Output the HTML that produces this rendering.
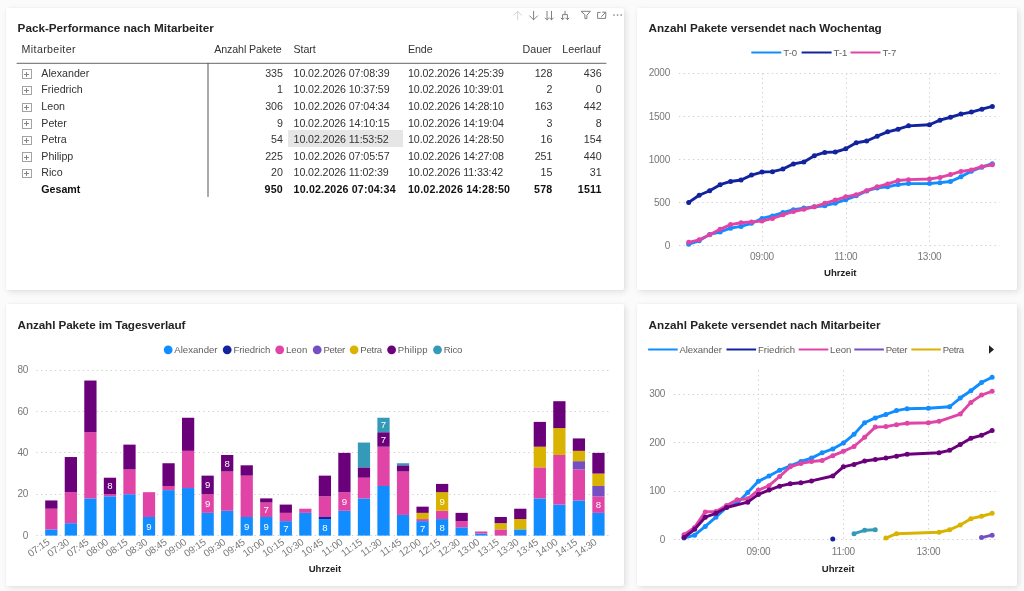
<!DOCTYPE html>
<html lang="de"><head><meta charset="utf-8"><title>Pack-Performance</title>
<style>
html,body{margin:0;padding:0}
body{width:1024px;height:591px;overflow:hidden;position:relative;background:#fbfbfb;font-family:"Liberation Sans",Arial,sans-serif;color:#333}
.panel{position:absolute;will-change:transform;background:#fff;border-radius:2px;box-shadow:2px 2px 6px rgba(0,0,0,.11),0 0 3px rgba(0,0,0,.05)}
.title{position:absolute;left:11.6px;top:12.9px;font-weight:bold;font-size:11.7px;line-height:14px;color:#252423;white-space:nowrap}
svg{position:absolute;left:0;top:0;overflow:visible}
svg text{font-family:"Liberation Sans",Arial,sans-serif}
.ax{font-size:10px;letter-spacing:-.22px;fill:#777}
.lg{font-size:9.6px;fill:#605E5C}
.at{font-size:9.6px;font-weight:bold;fill:#252423}
.dl{font-size:9.6px;fill:#fff}
.grid line{stroke:#cecece;stroke-width:1;stroke-dasharray:1.3 3.34}
.tbl{position:absolute;left:0;top:0;font-size:10.67px;color:#333}
.row{position:absolute;left:11px;width:589px;height:16.6px;line-height:16.6px;white-space:nowrap}
.row span{position:absolute;top:0}
.c1{left:24.3px}.c0{left:4.6px}
.c2{right:323.1px;text-align:right}
.c3{left:276.6px;letter-spacing:-.1px}.c4{left:391px;letter-spacing:-.1px}
.c5{right:53.6px;text-align:right}.c6{right:4.4px;text-align:right}.hd .c5{right:54.4px}.hd .c6{right:5.2px}
.hd .c0{letter-spacing:.36px}.hd .c2{letter-spacing:-.1px;right:324.4px}
.tot{font-weight:bold;color:#111}
.tot .c3,.tot .c4,.tot .c2,.tot .c5,.tot .c6{letter-spacing:.17px}
.ex{position:absolute;left:5.2px;top:4.5px;width:7.6px;height:7.6px;border:1px solid #a3a3a3;box-sizing:content-box}
.ex:before{content:"";position:absolute;left:1.3px;top:3.3px;width:5px;height:1px;background:#858585}
.ex:after{content:"";position:absolute;top:1.3px;left:3.3px;height:5px;width:1px;background:#858585}
.sel{position:absolute;left:282px;top:122.4px;width:115px;height:16.4px;background:#e6e6e6}
</style></head><body>

<div class="panel" style="left:6px;top:8px;width:618px;height:282px">
<div class="title">Pack-Performance nach Mitarbeiter</div>
<svg width="618" height="282" viewBox="6 8 618 282" fill="none" stroke-width="1" stroke-linecap="round" stroke-linejoin="round">
<g stroke="#d4d4d4"><path d="M517.6 19.8V11.3M513.7 15.2L517.6 11.3L521.5 15.2"/></g>
<g stroke="#808080">
<path d="M533.6 11.3V19.8M529.7 15.9L533.6 19.8L537.5 15.9"/>
<path d="M547 11.3V19.8M545.2 18L547 19.8L548.8 18M551.5 11.3V19.8M549.7 18L551.5 19.8L553.3 18"/>
<path d="M565 11.2V14.6M562.6 19.6V14.6H567.4V19.6M561.1 18.1L562.6 19.6L564.1 18.1M565.9 18.1L567.4 19.6L568.9 18.1"/>
<path d="M581.4 11.3H590.4L586.9 15.2V18.6H584.9V15.2Z"/>
<path d="M600.2 12.4H597.6V18.4H605.6V15.9M602.6 12.2H605.8V15.4M605.6 12.4L601.6 16.4"/>
</g>
<g fill="#808080" stroke="none"><circle cx="614" cy="15" r=".85"/><circle cx="617.6" cy="15" r=".85"/><circle cx="621.2" cy="15" r=".85"/></g>
<line x1="17" x2="606" y1="63.3" y2="63.3" stroke="#666"/>
<line x1="208" x2="208" y1="63.3" y2="196.5" stroke="#555"/>
</svg>
<div class="tbl">
<div class="sel"></div>
<div class="row hd" style="top:32.5px"><span class="c0">Mitarbeiter</span><span class="c2">Anzahl Pakete</span><span class="c3">Start</span><span class="c4">Ende</span><span class="c5">Dauer</span><span class="c6">Leerlauf</span></div>
<div class="row" style="top:56.8px"><i class="ex"></i><span class="c1">Alexander</span><span class="c2">335</span><span class="c3">10.02.2026 07:08:39</span><span class="c4">10.02.2026 14:25:39</span><span class="c5">128</span><span class="c6">436</span></div>
<div class="row" style="top:73.4px"><i class="ex"></i><span class="c1">Friedrich</span><span class="c2">1</span><span class="c3">10.02.2026 10:37:59</span><span class="c4">10.02.2026 10:39:01</span><span class="c5">2</span><span class="c6">0</span></div>
<div class="row" style="top:90px"><i class="ex"></i><span class="c1">Leon</span><span class="c2">306</span><span class="c3">10.02.2026 07:04:34</span><span class="c4">10.02.2026 14:28:10</span><span class="c5">163</span><span class="c6">442</span></div>
<div class="row" style="top:106.6px"><i class="ex"></i><span class="c1">Peter</span><span class="c2">9</span><span class="c3">10.02.2026 14:10:15</span><span class="c4">10.02.2026 14:19:04</span><span class="c5">3</span><span class="c6">8</span></div>
<div class="row" style="top:123.2px"><i class="ex"></i><span class="c1">Petra</span><span class="c2">54</span><span class="c3">10.02.2026 11:53:52</span><span class="c4">10.02.2026 14:28:50</span><span class="c5">16</span><span class="c6">154</span></div>
<div class="row" style="top:139.8px"><i class="ex"></i><span class="c1">Philipp</span><span class="c2">225</span><span class="c3">10.02.2026 07:05:57</span><span class="c4">10.02.2026 14:27:08</span><span class="c5">251</span><span class="c6">440</span></div>
<div class="row" style="top:156.4px"><i class="ex"></i><span class="c1">Rico</span><span class="c2">20</span><span class="c3">10.02.2026 11:02:39</span><span class="c4">10.02.2026 11:33:42</span><span class="c5">15</span><span class="c6">31</span></div>
<div class="row tot" style="top:173px"><span class="c1">Gesamt</span><span class="c2">950</span><span class="c3">10.02.2026 07:04:34</span><span class="c4">10.02.2026 14:28:50</span><span class="c5">578</span><span class="c6">1511</span></div>
</div></div>
<div class="panel" style="left:637px;top:8px;width:380px;height:282px">
<div class="title" style="letter-spacing:-.03px">Anzahl Pakete versendet nach Wochentag</div>
<svg width="380" height="282" viewBox="637 8 380 282">
<g class="grid">
<line x1="679" x2="999.5" y1="245.5" y2="245.5"/>
<line x1="679" x2="999.5" y1="202.5" y2="202.5"/>
<line x1="679" x2="999.5" y1="159.5" y2="159.5"/>
<line x1="679" x2="999.5" y1="116.5" y2="116.5"/>
<line x1="679" x2="999.5" y1="73.5" y2="73.5"/>
<line x1="762.5" x2="762.5" y1="73.4" y2="245.6"/>
<line x1="846.5" x2="846.5" y1="73.4" y2="245.6"/>
<line x1="929.5" x2="929.5" y1="73.4" y2="245.6"/>
</g>
<text class="ax" x="670" y="248.8" text-anchor="end">0</text>
<text class="ax" x="670" y="205.7" text-anchor="end">500</text>
<text class="ax" x="670" y="162.6" text-anchor="end">1000</text>
<text class="ax" x="670" y="119.5" text-anchor="end">1500</text>
<text class="ax" x="670" y="76.4" text-anchor="end">2000</text>
<text class="ax" x="761.99" y="259.6" text-anchor="middle">09:00</text>
<text class="ax" x="845.75" y="259.6" text-anchor="middle">11:00</text>
<text class="ax" x="929.51" y="259.6" text-anchor="middle">13:00</text>
<text class="at" x="840.3" y="276.2" text-anchor="middle">Uhrzeit</text>
<line x1="751.3" x2="781.3" y1="52.5" y2="52.5" stroke="#118DFF" stroke-width="2"/>
<text class="lg" x="783.3" y="55.9">T-0</text>
<line x1="801.6" x2="831.6" y1="52.5" y2="52.5" stroke="#12239E" stroke-width="2"/>
<text class="lg" x="833.6" y="55.9">T-1</text>
<line x1="850.5" x2="880.5" y1="52.5" y2="52.5" stroke="#E044A7" stroke-width="2"/>
<text class="lg" x="882.5" y="55.9">T-7</text>
<path d="M688.7 244.13 L699.17 240.86 L709.64 234.39 L720.11 231.98 L730.58 228.19 L741.05 226.38 L751.52 223.36 L761.99 218.45 L772.46 215.95 L782.93 212.59 L793.4 209.65 L803.87 208.1 L814.34 206.81 L824.81 205.69 L835.28 203.19 L845.75 199.74 L856.22 195.86 L866.69 190.95 L877.16 187.93 L887.63 186.73 L898.1 184.57 L908.57 183.62 L929.51 183.45 L939.98 182.67 L950.45 181.55 L960.92 176.81 L971.39 171.21 L981.86 167.16 L992.33 163.71" fill="none" stroke="#118DFF" stroke-width="2.9" stroke-linejoin="round" stroke-linecap="round"/><g fill="#118DFF"><circle cx="688.7" cy="244.13" r="2.5"/><circle cx="699.17" cy="240.86" r="2.5"/><circle cx="709.64" cy="234.39" r="2.5"/><circle cx="720.11" cy="231.98" r="2.5"/><circle cx="730.58" cy="228.19" r="2.5"/><circle cx="741.05" cy="226.38" r="2.5"/><circle cx="751.52" cy="223.36" r="2.5"/><circle cx="761.99" cy="218.45" r="2.5"/><circle cx="772.46" cy="215.95" r="2.5"/><circle cx="782.93" cy="212.59" r="2.5"/><circle cx="793.4" cy="209.65" r="2.5"/><circle cx="803.87" cy="208.1" r="2.5"/><circle cx="814.34" cy="206.81" r="2.5"/><circle cx="824.81" cy="205.69" r="2.5"/><circle cx="835.28" cy="203.19" r="2.5"/><circle cx="845.75" cy="199.74" r="2.5"/><circle cx="856.22" cy="195.86" r="2.5"/><circle cx="866.69" cy="190.95" r="2.5"/><circle cx="877.16" cy="187.93" r="2.5"/><circle cx="887.63" cy="186.73" r="2.5"/><circle cx="898.1" cy="184.57" r="2.5"/><circle cx="908.57" cy="183.62" r="2.5"/><circle cx="929.51" cy="183.45" r="2.5"/><circle cx="939.98" cy="182.67" r="2.5"/><circle cx="950.45" cy="181.55" r="2.5"/><circle cx="960.92" cy="176.81" r="2.5"/><circle cx="971.39" cy="171.21" r="2.5"/><circle cx="981.86" cy="167.16" r="2.5"/><circle cx="992.33" cy="163.71" r="2.5"/></g>
<path d="M688.7 202.41 L699.17 195.26 L709.64 190.78 L720.11 184.66 L730.58 181.47 L741.05 180 L751.52 175.09 L761.99 172.07 L772.46 171.64 L782.93 169.05 L793.4 163.88 L803.87 161.99 L814.34 155.69 L824.81 152.42 L835.28 151.99 L845.75 148.8 L856.22 142.76 L866.69 141.04 L877.16 136.21 L887.63 131.82 L898.1 129.23 L908.57 125.87 L929.51 124.75 L939.98 120.18 L950.45 117.25 L960.92 114.06 L971.39 112.08 L981.86 109.15 L992.33 106.39" fill="none" stroke="#12239E" stroke-width="2.9" stroke-linejoin="round" stroke-linecap="round"/><g fill="#12239E"><circle cx="688.7" cy="202.41" r="2.5"/><circle cx="699.17" cy="195.26" r="2.5"/><circle cx="709.64" cy="190.78" r="2.5"/><circle cx="720.11" cy="184.66" r="2.5"/><circle cx="730.58" cy="181.47" r="2.5"/><circle cx="741.05" cy="180" r="2.5"/><circle cx="751.52" cy="175.09" r="2.5"/><circle cx="761.99" cy="172.07" r="2.5"/><circle cx="772.46" cy="171.64" r="2.5"/><circle cx="782.93" cy="169.05" r="2.5"/><circle cx="793.4" cy="163.88" r="2.5"/><circle cx="803.87" cy="161.99" r="2.5"/><circle cx="814.34" cy="155.69" r="2.5"/><circle cx="824.81" cy="152.42" r="2.5"/><circle cx="835.28" cy="151.99" r="2.5"/><circle cx="845.75" cy="148.8" r="2.5"/><circle cx="856.22" cy="142.76" r="2.5"/><circle cx="866.69" cy="141.04" r="2.5"/><circle cx="877.16" cy="136.21" r="2.5"/><circle cx="887.63" cy="131.82" r="2.5"/><circle cx="898.1" cy="129.23" r="2.5"/><circle cx="908.57" cy="125.87" r="2.5"/><circle cx="929.51" cy="124.75" r="2.5"/><circle cx="939.98" cy="120.18" r="2.5"/><circle cx="950.45" cy="117.25" r="2.5"/><circle cx="960.92" cy="114.06" r="2.5"/><circle cx="971.39" cy="112.08" r="2.5"/><circle cx="981.86" cy="109.15" r="2.5"/><circle cx="992.33" cy="106.39" r="2.5"/></g>
<path d="M688.7 242.32 L699.17 239.82 L709.64 234.74 L720.11 229.22 L730.58 224.57 L741.05 222.76 L751.52 221.89 L761.99 221.12 L772.46 218.45 L782.93 214.83 L793.4 211.46 L803.87 209.22 L814.34 206.81 L824.81 203.28 L835.28 200.09 L845.75 196.81 L856.22 194.74 L866.69 190.69 L877.16 186.81 L887.63 183.97 L898.1 180.52 L908.57 179.66 L929.51 179.05 L939.98 177.42 L950.45 174.57 L960.92 171.47 L971.39 169.92 L981.86 166.64 L992.33 164.83" fill="none" stroke="#E044A7" stroke-width="2.9" stroke-linejoin="round" stroke-linecap="round"/><g fill="#E044A7"><circle cx="688.7" cy="242.32" r="2.5"/><circle cx="699.17" cy="239.82" r="2.5"/><circle cx="709.64" cy="234.74" r="2.5"/><circle cx="720.11" cy="229.22" r="2.5"/><circle cx="730.58" cy="224.57" r="2.5"/><circle cx="741.05" cy="222.76" r="2.5"/><circle cx="751.52" cy="221.89" r="2.5"/><circle cx="761.99" cy="221.12" r="2.5"/><circle cx="772.46" cy="218.45" r="2.5"/><circle cx="782.93" cy="214.83" r="2.5"/><circle cx="793.4" cy="211.46" r="2.5"/><circle cx="803.87" cy="209.22" r="2.5"/><circle cx="814.34" cy="206.81" r="2.5"/><circle cx="824.81" cy="203.28" r="2.5"/><circle cx="835.28" cy="200.09" r="2.5"/><circle cx="845.75" cy="196.81" r="2.5"/><circle cx="856.22" cy="194.74" r="2.5"/><circle cx="866.69" cy="190.69" r="2.5"/><circle cx="877.16" cy="186.81" r="2.5"/><circle cx="887.63" cy="183.97" r="2.5"/><circle cx="898.1" cy="180.52" r="2.5"/><circle cx="908.57" cy="179.66" r="2.5"/><circle cx="929.51" cy="179.05" r="2.5"/><circle cx="939.98" cy="177.42" r="2.5"/><circle cx="950.45" cy="174.57" r="2.5"/><circle cx="960.92" cy="171.47" r="2.5"/><circle cx="971.39" cy="169.92" r="2.5"/><circle cx="981.86" cy="166.64" r="2.5"/><circle cx="992.33" cy="164.83" r="2.5"/></g>
</svg></div>
<div class="panel" style="left:6px;top:304px;width:618px;height:282px">
<div class="title" style="top:14px;letter-spacing:-.1px">Anzahl Pakete im Tagesverlauf</div>
<svg width="618" height="282" viewBox="6 304 618 282">
<g class="grid">
<line x1="36.4" x2="611" y1="535.5" y2="535.5"/>
<line x1="36.4" x2="611" y1="494.5" y2="494.5"/>
<line x1="36.4" x2="611" y1="452.5" y2="452.5"/>
<line x1="36.4" x2="611" y1="411.5" y2="411.5"/>
<line x1="36.4" x2="611" y1="370.5" y2="370.5"/>
</g>
<text class="ax" x="28.2" y="538.7" text-anchor="end">0</text>
<text class="ax" x="28.2" y="497.35" text-anchor="end">20</text>
<text class="ax" x="28.2" y="456" text-anchor="end">40</text>
<text class="ax" x="28.2" y="414.65" text-anchor="end">60</text>
<text class="ax" x="28.2" y="373.3" text-anchor="end">80</text>
<circle cx="168.15" cy="349.8" r="4.4" fill="#118DFF"/>
<text class="lg" x="174.35" y="353.2">Alexander</text>
<circle cx="227.2" cy="349.8" r="4.4" fill="#12239E"/>
<text class="lg" x="233.4" y="353.2" style="letter-spacing:-0.05px">Friedrich</text>
<circle cx="279.7" cy="349.8" r="4.4" fill="#E044A7"/>
<text class="lg" x="285.9" y="353.2">Leon</text>
<circle cx="317.2" cy="349.8" r="4.4" fill="#744EC2"/>
<text class="lg" x="323.4" y="353.2" style="letter-spacing:-0.28px">Peter</text>
<circle cx="354.1" cy="349.8" r="4.4" fill="#D9B300"/>
<text class="lg" x="360.3" y="353.2" style="letter-spacing:-0.26px">Petra</text>
<circle cx="391.6" cy="349.8" r="4.4" fill="#6B007B"/>
<text class="lg" x="397.8" y="353.2" style="letter-spacing:0.15px">Philipp</text>
<circle cx="437.5" cy="349.8" r="4.4" fill="#3599B8"/>
<text class="lg" x="443.7" y="353.2" style="letter-spacing:-0.15px">Rico</text>
<rect x="45.2" y="529.4" width="12.25" height="6.2" fill="#118DFF"/>
<rect x="45.2" y="508.72" width="12.25" height="20.68" fill="#E044A7"/>
<rect x="45.2" y="500.45" width="12.25" height="8.27" fill="#6B007B"/>
<text class="ax" text-anchor="end" transform="translate(50.32 543.6) rotate(-35)">07:15</text>
<rect x="64.74" y="523.2" width="12.25" height="12.4" fill="#118DFF"/>
<rect x="64.74" y="492.18" width="12.25" height="31.01" fill="#E044A7"/>
<rect x="64.74" y="457.04" width="12.25" height="35.15" fill="#6B007B"/>
<text class="ax" text-anchor="end" transform="translate(69.86 543.6) rotate(-35)">07:30</text>
<rect x="84.28" y="498.39" width="12.25" height="37.21" fill="#118DFF"/>
<rect x="84.28" y="432.23" width="12.25" height="66.16" fill="#E044A7"/>
<rect x="84.28" y="380.54" width="12.25" height="51.69" fill="#6B007B"/>
<text class="ax" text-anchor="end" transform="translate(89.4 543.6) rotate(-35)">07:45</text>
<rect x="103.82" y="496.32" width="12.25" height="39.28" fill="#118DFF"/>
<rect x="103.82" y="494.25" width="12.25" height="2.07" fill="#E044A7"/>
<rect x="103.82" y="477.71" width="12.25" height="16.54" fill="#6B007B"/>
<text class="dl" x="109.94" y="489.38" text-anchor="middle">8</text>
<text class="ax" text-anchor="end" transform="translate(108.94 543.6) rotate(-35)">08:00</text>
<rect x="123.36" y="494.25" width="12.25" height="41.35" fill="#118DFF"/>
<rect x="123.36" y="469.44" width="12.25" height="24.81" fill="#E044A7"/>
<rect x="123.36" y="444.63" width="12.25" height="24.81" fill="#6B007B"/>
<text class="ax" text-anchor="end" transform="translate(128.48 543.6) rotate(-35)">08:15</text>
<rect x="142.9" y="516.99" width="12.25" height="18.61" fill="#118DFF"/>
<text class="dl" x="149.02" y="529.7" text-anchor="middle">9</text>
<rect x="142.9" y="492.18" width="12.25" height="24.81" fill="#E044A7"/>
<text class="ax" text-anchor="end" transform="translate(148.02 543.6) rotate(-35)">08:30</text>
<rect x="162.44" y="490.12" width="12.25" height="45.49" fill="#118DFF"/>
<rect x="162.44" y="485.98" width="12.25" height="4.13" fill="#E044A7"/>
<rect x="162.44" y="463.24" width="12.25" height="22.74" fill="#6B007B"/>
<text class="ax" text-anchor="end" transform="translate(167.56 543.6) rotate(-35)">08:45</text>
<rect x="181.98" y="488.05" width="12.25" height="47.55" fill="#118DFF"/>
<rect x="181.98" y="450.83" width="12.25" height="37.21" fill="#E044A7"/>
<rect x="181.98" y="417.75" width="12.25" height="33.08" fill="#6B007B"/>
<text class="ax" text-anchor="end" transform="translate(187.1 543.6) rotate(-35)">09:00</text>
<rect x="201.52" y="512.86" width="12.25" height="22.74" fill="#118DFF"/>
<rect x="201.52" y="494.25" width="12.25" height="18.61" fill="#E044A7"/>
<text class="dl" x="207.64" y="506.95" text-anchor="middle">9</text>
<rect x="201.52" y="475.64" width="12.25" height="18.61" fill="#6B007B"/>
<text class="dl" x="207.64" y="488.35" text-anchor="middle">9</text>
<text class="ax" text-anchor="end" transform="translate(206.64 543.6) rotate(-35)">09:15</text>
<rect x="221.06" y="510.79" width="12.25" height="24.81" fill="#118DFF"/>
<rect x="221.06" y="471.51" width="12.25" height="39.28" fill="#E044A7"/>
<rect x="221.06" y="454.97" width="12.25" height="16.54" fill="#6B007B"/>
<text class="dl" x="227.18" y="466.64" text-anchor="middle">8</text>
<text class="ax" text-anchor="end" transform="translate(226.18 543.6) rotate(-35)">09:30</text>
<rect x="240.6" y="516.99" width="12.25" height="18.61" fill="#118DFF"/>
<text class="dl" x="246.72" y="529.7" text-anchor="middle">9</text>
<rect x="240.6" y="475.64" width="12.25" height="41.35" fill="#E044A7"/>
<rect x="240.6" y="465.31" width="12.25" height="10.34" fill="#6B007B"/>
<text class="ax" text-anchor="end" transform="translate(245.72 543.6) rotate(-35)">09:45</text>
<rect x="260.14" y="516.99" width="12.25" height="18.61" fill="#118DFF"/>
<text class="dl" x="266.26" y="529.7" text-anchor="middle">9</text>
<rect x="260.14" y="502.52" width="12.25" height="14.47" fill="#E044A7"/>
<text class="dl" x="266.26" y="513.16" text-anchor="middle">7</text>
<rect x="260.14" y="498.39" width="12.25" height="4.13" fill="#6B007B"/>
<text class="ax" text-anchor="end" transform="translate(265.26 543.6) rotate(-35)">10:00</text>
<rect x="279.68" y="521.13" width="12.25" height="14.47" fill="#118DFF"/>
<text class="dl" x="285.8" y="531.76" text-anchor="middle">7</text>
<rect x="279.68" y="512.86" width="12.25" height="8.27" fill="#E044A7"/>
<rect x="279.68" y="504.59" width="12.25" height="8.27" fill="#6B007B"/>
<text class="ax" text-anchor="end" transform="translate(284.8 543.6) rotate(-35)">10:15</text>
<rect x="299.22" y="512.86" width="12.25" height="22.74" fill="#118DFF"/>
<rect x="299.22" y="508.72" width="12.25" height="4.14" fill="#E044A7"/>
<text class="ax" text-anchor="end" transform="translate(304.34 543.6) rotate(-35)">10:30</text>
<rect x="318.76" y="519.06" width="12.25" height="16.54" fill="#118DFF"/>
<text class="dl" x="324.88" y="530.73" text-anchor="middle">8</text>
<rect x="318.76" y="516.99" width="12.25" height="2.07" fill="#12239E"/>
<rect x="318.76" y="496.32" width="12.25" height="20.68" fill="#E044A7"/>
<rect x="318.76" y="475.64" width="12.25" height="20.67" fill="#6B007B"/>
<text class="ax" text-anchor="end" transform="translate(323.88 543.6) rotate(-35)">10:45</text>
<rect x="338.3" y="510.79" width="12.25" height="24.81" fill="#118DFF"/>
<rect x="338.3" y="492.18" width="12.25" height="18.61" fill="#E044A7"/>
<text class="dl" x="344.42" y="504.89" text-anchor="middle">9</text>
<rect x="338.3" y="452.9" width="12.25" height="39.28" fill="#6B007B"/>
<text class="ax" text-anchor="end" transform="translate(343.42 543.6) rotate(-35)">11:00</text>
<rect x="357.84" y="498.39" width="12.25" height="37.21" fill="#118DFF"/>
<rect x="357.84" y="477.71" width="12.25" height="20.68" fill="#E044A7"/>
<rect x="357.84" y="467.37" width="12.25" height="10.34" fill="#6B007B"/>
<rect x="357.84" y="442.56" width="12.25" height="24.81" fill="#3599B8"/>
<text class="ax" text-anchor="end" transform="translate(362.96 543.6) rotate(-35)">11:15</text>
<rect x="377.38" y="485.98" width="12.25" height="49.62" fill="#118DFF"/>
<rect x="377.38" y="446.7" width="12.25" height="39.28" fill="#E044A7"/>
<rect x="377.38" y="432.23" width="12.25" height="14.47" fill="#6B007B"/>
<text class="dl" x="383.5" y="442.86" text-anchor="middle">7</text>
<rect x="377.38" y="417.75" width="12.25" height="14.47" fill="#3599B8"/>
<text class="dl" x="383.5" y="428.39" text-anchor="middle">7</text>
<text class="ax" text-anchor="end" transform="translate(382.5 543.6) rotate(-35)">11:30</text>
<rect x="396.92" y="514.93" width="12.25" height="20.67" fill="#118DFF"/>
<rect x="396.92" y="471.51" width="12.25" height="43.42" fill="#E044A7"/>
<rect x="396.92" y="465.31" width="12.25" height="6.2" fill="#6B007B"/>
<rect x="396.92" y="463.24" width="12.25" height="2.07" fill="#3599B8"/>
<text class="ax" text-anchor="end" transform="translate(402.04 543.6) rotate(-35)">11:45</text>
<rect x="416.46" y="521.13" width="12.25" height="14.47" fill="#118DFF"/>
<text class="dl" x="422.58" y="531.76" text-anchor="middle">7</text>
<rect x="416.46" y="519.06" width="12.25" height="2.07" fill="#E044A7"/>
<rect x="416.46" y="512.86" width="12.25" height="6.2" fill="#D9B300"/>
<rect x="416.46" y="506.66" width="12.25" height="6.2" fill="#6B007B"/>
<text class="ax" text-anchor="end" transform="translate(421.58 543.6) rotate(-35)">12:00</text>
<rect x="436" y="519.06" width="12.25" height="16.54" fill="#118DFF"/>
<text class="dl" x="442.12" y="530.73" text-anchor="middle">8</text>
<rect x="436" y="510.79" width="12.25" height="8.27" fill="#E044A7"/>
<rect x="436" y="492.18" width="12.25" height="18.61" fill="#D9B300"/>
<text class="dl" x="442.12" y="504.89" text-anchor="middle">9</text>
<rect x="436" y="483.91" width="12.25" height="8.27" fill="#6B007B"/>
<text class="ax" text-anchor="end" transform="translate(441.12 543.6) rotate(-35)">12:15</text>
<rect x="455.54" y="527.33" width="12.25" height="8.27" fill="#118DFF"/>
<rect x="455.54" y="521.13" width="12.25" height="6.2" fill="#E044A7"/>
<rect x="455.54" y="512.86" width="12.25" height="8.27" fill="#6B007B"/>
<text class="ax" text-anchor="end" transform="translate(460.66 543.6) rotate(-35)">12:30</text>
<rect x="475.08" y="533.53" width="12.25" height="2.07" fill="#118DFF"/>
<rect x="475.08" y="531.47" width="12.25" height="2.07" fill="#E044A7"/>
<text class="ax" text-anchor="end" transform="translate(480.2 543.6) rotate(-35)">13:00</text>
<rect x="494.62" y="529.4" width="12.25" height="6.2" fill="#E044A7"/>
<rect x="494.62" y="523.2" width="12.25" height="6.2" fill="#D9B300"/>
<rect x="494.62" y="516.99" width="12.25" height="6.2" fill="#6B007B"/>
<text class="ax" text-anchor="end" transform="translate(499.74 543.6) rotate(-35)">13:15</text>
<rect x="514.16" y="529.4" width="12.25" height="6.2" fill="#118DFF"/>
<rect x="514.16" y="519.06" width="12.25" height="10.34" fill="#D9B300"/>
<rect x="514.16" y="508.72" width="12.25" height="10.34" fill="#6B007B"/>
<text class="ax" text-anchor="end" transform="translate(519.28 543.6) rotate(-35)">13:30</text>
<rect x="533.7" y="498.39" width="12.25" height="37.21" fill="#118DFF"/>
<rect x="533.7" y="467.37" width="12.25" height="31.01" fill="#E044A7"/>
<rect x="533.7" y="446.7" width="12.25" height="20.68" fill="#D9B300"/>
<rect x="533.7" y="421.89" width="12.25" height="24.81" fill="#6B007B"/>
<text class="ax" text-anchor="end" transform="translate(538.82 543.6) rotate(-35)">13:45</text>
<rect x="553.24" y="504.59" width="12.25" height="31.01" fill="#118DFF"/>
<rect x="553.24" y="454.97" width="12.25" height="49.62" fill="#E044A7"/>
<rect x="553.24" y="428.09" width="12.25" height="26.88" fill="#D9B300"/>
<rect x="553.24" y="401.21" width="12.25" height="26.88" fill="#6B007B"/>
<text class="ax" text-anchor="end" transform="translate(558.36 543.6) rotate(-35)">14:00</text>
<rect x="572.78" y="500.45" width="12.25" height="35.15" fill="#118DFF"/>
<rect x="572.78" y="469.44" width="12.25" height="31.01" fill="#E044A7"/>
<rect x="572.78" y="461.17" width="12.25" height="8.27" fill="#744EC2"/>
<rect x="572.78" y="450.83" width="12.25" height="10.34" fill="#D9B300"/>
<rect x="572.78" y="438.43" width="12.25" height="12.41" fill="#6B007B"/>
<text class="ax" text-anchor="end" transform="translate(577.9 543.6) rotate(-35)">14:15</text>
<rect x="592.32" y="512.86" width="12.25" height="22.74" fill="#118DFF"/>
<rect x="592.32" y="496.32" width="12.25" height="16.54" fill="#E044A7"/>
<text class="dl" x="598.44" y="507.99" text-anchor="middle">8</text>
<rect x="592.32" y="485.98" width="12.25" height="10.34" fill="#744EC2"/>
<rect x="592.32" y="473.58" width="12.25" height="12.4" fill="#D9B300"/>
<rect x="592.32" y="452.9" width="12.25" height="20.68" fill="#6B007B"/>
<text class="ax" text-anchor="end" transform="translate(597.44 543.6) rotate(-35)">14:30</text>
<text class="at" x="324.9" y="571.9" text-anchor="middle">Uhrzeit</text>
</svg></div>
<div class="panel" style="left:637px;top:304px;width:380px;height:282px">
<div class="title" style="top:13.5px;letter-spacing:.02px">Anzahl Pakete versendet nach Mitarbeiter</div>
<svg width="380" height="282" viewBox="637 304 380 282">
<g class="grid">
<line x1="674" x2="999" y1="539.5" y2="539.5"/>
<line x1="674" x2="999" y1="491.5" y2="491.5"/>
<line x1="674" x2="999" y1="442.5" y2="442.5"/>
<line x1="674" x2="999" y1="394.5" y2="394.5"/>
<line x1="758.5" x2="758.5" y1="370.4" y2="539.5"/>
<line x1="843.5" x2="843.5" y1="370.4" y2="539.5"/>
<line x1="928.5" x2="928.5" y1="370.4" y2="539.5"/>
</g>
<text class="ax" x="665.2" y="542.7" text-anchor="end">0</text>
<text class="ax" x="665.2" y="494.25" text-anchor="end">100</text>
<text class="ax" x="665.2" y="445.8" text-anchor="end">200</text>
<text class="ax" x="665.2" y="397.35" text-anchor="end">300</text>
<text class="ax" x="758.38" y="554.7" text-anchor="middle">09:00</text>
<text class="ax" x="843.38" y="554.7" text-anchor="middle">11:00</text>
<text class="ax" x="928.38" y="554.7" text-anchor="middle">13:00</text>
<text class="at" x="838.1" y="571.9" text-anchor="middle">Uhrzeit</text>
<line x1="648.1" x2="677.7" y1="349.5" y2="349.5" stroke="#118DFF" stroke-width="2"/>
<text class="lg" x="679.5" y="353" style="letter-spacing:-0.1px">Alexander</text>
<line x1="726.5" x2="756.1" y1="349.5" y2="349.5" stroke="#12239E" stroke-width="2"/>
<text class="lg" x="757.9" y="353">Friedrich</text>
<line x1="798.7" x2="828.3" y1="349.5" y2="349.5" stroke="#E044A7" stroke-width="2"/>
<text class="lg" x="830.1" y="353">Leon</text>
<line x1="854.3" x2="883.9" y1="349.5" y2="349.5" stroke="#744EC2" stroke-width="2"/>
<text class="lg" x="885.7" y="353" style="letter-spacing:-0.3px">Peter</text>
<line x1="911.3" x2="940.9" y1="349.5" y2="349.5" stroke="#D9B300" stroke-width="2"/>
<text class="lg" x="942.7" y="353" style="letter-spacing:-0.38px">Petra</text>
<path d="M989 345.2L994 349.5L989 353.8Z" fill="#222"/>
<path d="M684 538.05 L694.62 535.14 L705.25 526.42 L715.88 517.21 L726.5 507.52 L737.12 503.16 L747.75 492.5 L758.38 481.36 L769 476.03 L779.62 470.22 L790.25 465.86 L800.88 461.5 L811.5 458.1 L822.12 452.77 L832.75 448.9 L843.38 443.08 L854 434.36 L864.62 422.74 L875.25 417.89 L885.88 414.5 L896.5 410.62 L907.12 408.69 L928.38 408.2 L949.62 406.75 L960.25 398.03 L970.88 390.76 L981.5 382.52 L992.12 377.19" fill="none" stroke="#118DFF" stroke-width="2.9" stroke-linejoin="round" stroke-linecap="round"/><g fill="#118DFF"><circle cx="684" cy="538.05" r="2.5"/><circle cx="694.62" cy="535.14" r="2.5"/><circle cx="705.25" cy="526.42" r="2.5"/><circle cx="715.88" cy="517.21" r="2.5"/><circle cx="726.5" cy="507.52" r="2.5"/><circle cx="737.12" cy="503.16" r="2.5"/><circle cx="747.75" cy="492.5" r="2.5"/><circle cx="758.38" cy="481.36" r="2.5"/><circle cx="769" cy="476.03" r="2.5"/><circle cx="779.62" cy="470.22" r="2.5"/><circle cx="790.25" cy="465.86" r="2.5"/><circle cx="800.88" cy="461.5" r="2.5"/><circle cx="811.5" cy="458.1" r="2.5"/><circle cx="822.12" cy="452.77" r="2.5"/><circle cx="832.75" cy="448.9" r="2.5"/><circle cx="843.38" cy="443.08" r="2.5"/><circle cx="854" cy="434.36" r="2.5"/><circle cx="864.62" cy="422.74" r="2.5"/><circle cx="875.25" cy="417.89" r="2.5"/><circle cx="885.88" cy="414.5" r="2.5"/><circle cx="896.5" cy="410.62" r="2.5"/><circle cx="907.12" cy="408.69" r="2.5"/><circle cx="928.38" cy="408.2" r="2.5"/><circle cx="949.62" cy="406.75" r="2.5"/><circle cx="960.25" cy="398.03" r="2.5"/><circle cx="970.88" cy="390.76" r="2.5"/><circle cx="981.5" cy="382.52" r="2.5"/><circle cx="992.12" cy="377.19" r="2.5"/></g>
<g fill="#12239E"><circle cx="832.75" cy="539.02" r="2.5"/></g>
<path d="M684 534.65 L694.62 527.39 L705.25 511.88 L715.88 511.4 L726.5 505.58 L737.12 499.77 L747.75 498.8 L758.38 490.08 L769 485.72 L779.62 476.51 L790.25 466.82 L800.88 463.43 L811.5 461.5 L822.12 460.53 L832.75 455.68 L843.38 451.32 L854 446.48 L864.62 437.27 L875.25 427.1 L885.88 426.61 L896.5 424.67 L907.12 423.22 L928.38 422.74 L939 421.28 L960.25 414.01 L970.88 402.39 L981.5 395.12 L992.12 391.24" fill="none" stroke="#E044A7" stroke-width="2.9" stroke-linejoin="round" stroke-linecap="round"/><g fill="#E044A7"><circle cx="684" cy="534.65" r="2.5"/><circle cx="694.62" cy="527.39" r="2.5"/><circle cx="705.25" cy="511.88" r="2.5"/><circle cx="715.88" cy="511.4" r="2.5"/><circle cx="726.5" cy="505.58" r="2.5"/><circle cx="737.12" cy="499.77" r="2.5"/><circle cx="747.75" cy="498.8" r="2.5"/><circle cx="758.38" cy="490.08" r="2.5"/><circle cx="769" cy="485.72" r="2.5"/><circle cx="779.62" cy="476.51" r="2.5"/><circle cx="790.25" cy="466.82" r="2.5"/><circle cx="800.88" cy="463.43" r="2.5"/><circle cx="811.5" cy="461.5" r="2.5"/><circle cx="822.12" cy="460.53" r="2.5"/><circle cx="832.75" cy="455.68" r="2.5"/><circle cx="843.38" cy="451.32" r="2.5"/><circle cx="854" cy="446.48" r="2.5"/><circle cx="864.62" cy="437.27" r="2.5"/><circle cx="875.25" cy="427.1" r="2.5"/><circle cx="885.88" cy="426.61" r="2.5"/><circle cx="896.5" cy="424.67" r="2.5"/><circle cx="907.12" cy="423.22" r="2.5"/><circle cx="928.38" cy="422.74" r="2.5"/><circle cx="939" cy="421.28" r="2.5"/><circle cx="960.25" cy="414.01" r="2.5"/><circle cx="970.88" cy="402.39" r="2.5"/><circle cx="981.5" cy="395.12" r="2.5"/><circle cx="992.12" cy="391.24" r="2.5"/></g>
<path d="M981.5 537.56 L992.12 535.14" fill="none" stroke="#744EC2" stroke-width="2.9" stroke-linejoin="round" stroke-linecap="round"/><g fill="#744EC2"><circle cx="981.5" cy="537.56" r="2.5"/><circle cx="992.12" cy="535.14" r="2.5"/></g>
<path d="M885.88 538.05 L896.5 533.69 L939 532.23 L949.62 529.81 L960.25 524.97 L970.88 518.67 L981.5 516.24 L992.12 513.34" fill="none" stroke="#D9B300" stroke-width="2.9" stroke-linejoin="round" stroke-linecap="round"/><g fill="#D9B300"><circle cx="885.88" cy="538.05" r="2.5"/><circle cx="896.5" cy="533.69" r="2.5"/><circle cx="939" cy="532.23" r="2.5"/><circle cx="949.62" cy="529.81" r="2.5"/><circle cx="960.25" cy="524.97" r="2.5"/><circle cx="970.88" cy="518.67" r="2.5"/><circle cx="981.5" cy="516.24" r="2.5"/><circle cx="992.12" cy="513.34" r="2.5"/></g>
<path d="M684 537.56 L694.62 529.33 L705.25 517.21 L715.88 513.34 L726.5 507.52 L747.75 502.19 L758.38 494.44 L769 490.08 L779.62 486.2 L790.25 483.78 L800.88 482.81 L811.5 480.88 L832.75 476.03 L843.38 466.82 L854 464.4 L864.62 461.01 L875.25 459.56 L885.88 458.1 L896.5 456.17 L907.12 454.23 L939 452.77 L949.62 450.35 L960.25 444.54 L970.88 438.24 L981.5 435.33 L992.12 430.49" fill="none" stroke="#6B007B" stroke-width="2.9" stroke-linejoin="round" stroke-linecap="round"/><g fill="#6B007B"><circle cx="684" cy="537.56" r="2.5"/><circle cx="694.62" cy="529.33" r="2.5"/><circle cx="705.25" cy="517.21" r="2.5"/><circle cx="715.88" cy="513.34" r="2.5"/><circle cx="726.5" cy="507.52" r="2.5"/><circle cx="747.75" cy="502.19" r="2.5"/><circle cx="758.38" cy="494.44" r="2.5"/><circle cx="769" cy="490.08" r="2.5"/><circle cx="779.62" cy="486.2" r="2.5"/><circle cx="790.25" cy="483.78" r="2.5"/><circle cx="800.88" cy="482.81" r="2.5"/><circle cx="811.5" cy="480.88" r="2.5"/><circle cx="832.75" cy="476.03" r="2.5"/><circle cx="843.38" cy="466.82" r="2.5"/><circle cx="854" cy="464.4" r="2.5"/><circle cx="864.62" cy="461.01" r="2.5"/><circle cx="875.25" cy="459.56" r="2.5"/><circle cx="885.88" cy="458.1" r="2.5"/><circle cx="896.5" cy="456.17" r="2.5"/><circle cx="907.12" cy="454.23" r="2.5"/><circle cx="939" cy="452.77" r="2.5"/><circle cx="949.62" cy="450.35" r="2.5"/><circle cx="960.25" cy="444.54" r="2.5"/><circle cx="970.88" cy="438.24" r="2.5"/><circle cx="981.5" cy="435.33" r="2.5"/><circle cx="992.12" cy="430.49" r="2.5"/></g>
<path d="M854 533.69 L864.62 530.29 L875.25 529.81" fill="none" stroke="#3599B8" stroke-width="2.9" stroke-linejoin="round" stroke-linecap="round"/><g fill="#3599B8"><circle cx="854" cy="533.69" r="2.5"/><circle cx="864.62" cy="530.29" r="2.5"/><circle cx="875.25" cy="529.81" r="2.5"/></g>
</svg></div>
</body></html>
